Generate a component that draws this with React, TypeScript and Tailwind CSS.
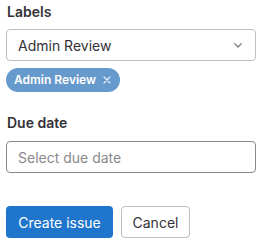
import React from "react";

export default function App() {
  return (
    <div className="w-[266px] h-[250px] bg-white px-[6px] pt-[2px]" style={{ fontFamily: "Inter, 'Noto Sans', sans-serif" }}>
      <div className="text-[14px] leading-[20px] font-semibold text-[#333238] ml-[1px]">Labels</div>
      <div className="mt-[7px] h-[32px] w-[250px] rounded-[4px] border border-[#bfbfc3] flex items-center justify-between pl-[11px] pr-[13px]">
        <span className="text-[14px] text-[#333238]">Admin Review</span>
        <svg width="8" height="5" viewBox="0 0 8 5" fill="none">
          <path d="M0.7 0.7l3.3 3.3 3.3-3.3" stroke="#737278" strokeWidth="1.2" strokeLinecap="round" strokeLinejoin="round" />
        </svg>
      </div>
      <div className="mt-[7px] inline-flex items-center h-[24px] rounded-full bg-[#6699cc] pl-[8px] pr-[9px] gap-[7px]">
        <span className="text-[12px] font-semibold text-white">Admin Review</span>
        <svg width="8" height="8" viewBox="0 0 8 8" fill="none">
          <path d="M1 1l6 6M7 1l-6 6" stroke="white" strokeOpacity="0.9" strokeWidth="1.1" strokeLinecap="round" />
        </svg>
      </div>
      <div className="mt-[21px] text-[14px] leading-[20px] font-semibold text-[#333238] ml-[1px]">Due date</div>
      <div className="mt-[8px] h-[32px] w-[250px] rounded-[4px] border border-[#89888d] flex items-center pl-[11px]">
        <span className="text-[14px] text-[#89888d]">Select due date</span>
      </div>
      <div className="mt-[33px] flex gap-[8px]">
        <button className="h-[32px] w-[107px] rounded-[4px] bg-[#1f75cb] text-white text-[14px]">Create issue</button>
        <button className="h-[32px] w-[69px] rounded-[4px] border border-[#bfbfc3] text-[#333238] text-[14px] bg-white">Cancel</button>
      </div>
    </div>
  );
}
